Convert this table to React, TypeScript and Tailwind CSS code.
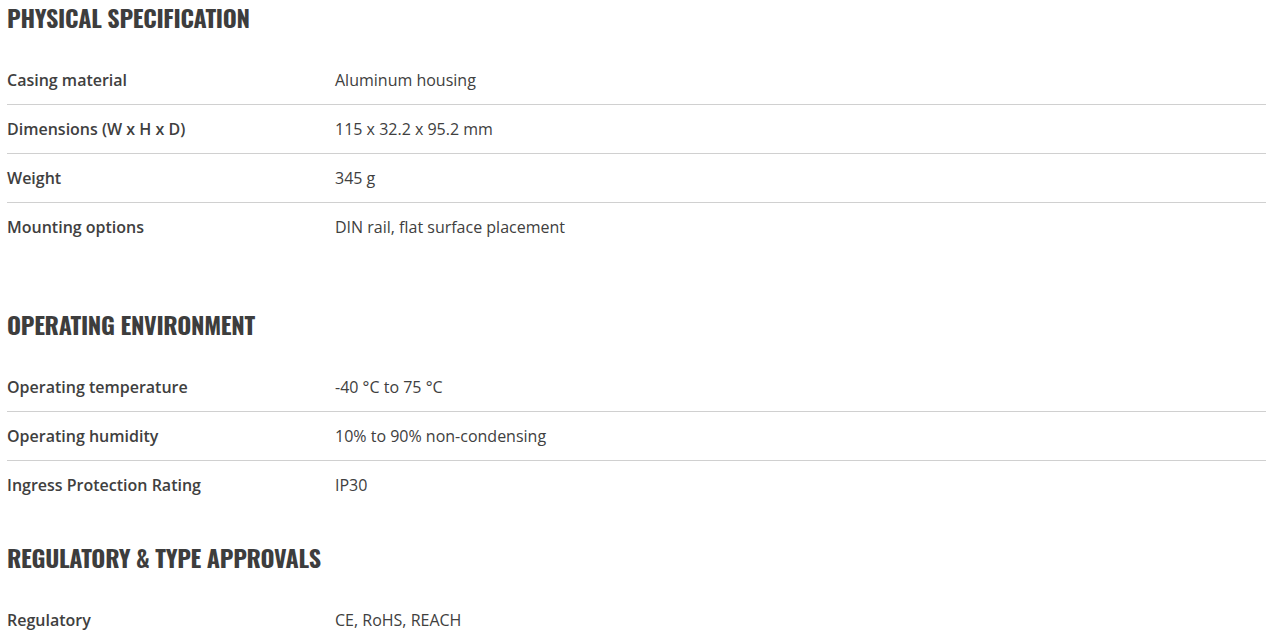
const sections = [
  {
    title: 'PHYSICAL SPECIFICATION',
    after: 'mb-[56px]',
    rows: [
      ['Casing material', 'Aluminum housing'],
      ['Dimensions (W x H x D)', '115 x 32.2 x 95.2 mm'],
      ['Weight', '345 g'],
      ['Mounting options', 'DIN rail, flat surface placement'],
    ],
  },
  {
    title: 'OPERATING ENVIRONMENT',
    after: 'mb-[31px]',
    rows: [
      ['Operating temperature', '-40 °C to 75 °C'],
      ['Operating humidity', '10% to 90% non-condensing'],
      ['Ingress Protection Rating', 'IP30'],
    ],
  },
  {
    title: 'REGULATORY & TYPE APPROVALS',
    after: '',
    rows: [['Regulatory', 'CE, RoHS, REACH']],
  },
];

export default function App() {
  return (
    <main className="min-h-screen bg-white pl-[7px] pr-[6px] text-[#404040] font-['Open_Sans',sans-serif]">
      {sections.map((s) => (
        <section key={s.title} className={s.after}>
          {/* heading */}
          <h2 className="h-[34px] flex items-center text-[24px] font-bold tracking-[-0.3px] text-[#3d3d3d] font-['Oswald','Liberation_Sans_Narrow',sans-serif]">
            {s.title}
          </h2>

          <div className="mt-[22px]">
            {s.rows.map(([label, value], i) => (
              <div
                key={label}
                className={
                  'flex items-center h-12 text-base ' +
                  (i < s.rows.length - 1 ? 'box-content border-b border-[#d0d0d0]' : '')
                }
              >
                <div className="w-[328px] font-semibold">{label}</div>
                <div>{value}</div>
              </div>
            ))}
          </div>
        </section>
      ))}
    </main>
  );
}
